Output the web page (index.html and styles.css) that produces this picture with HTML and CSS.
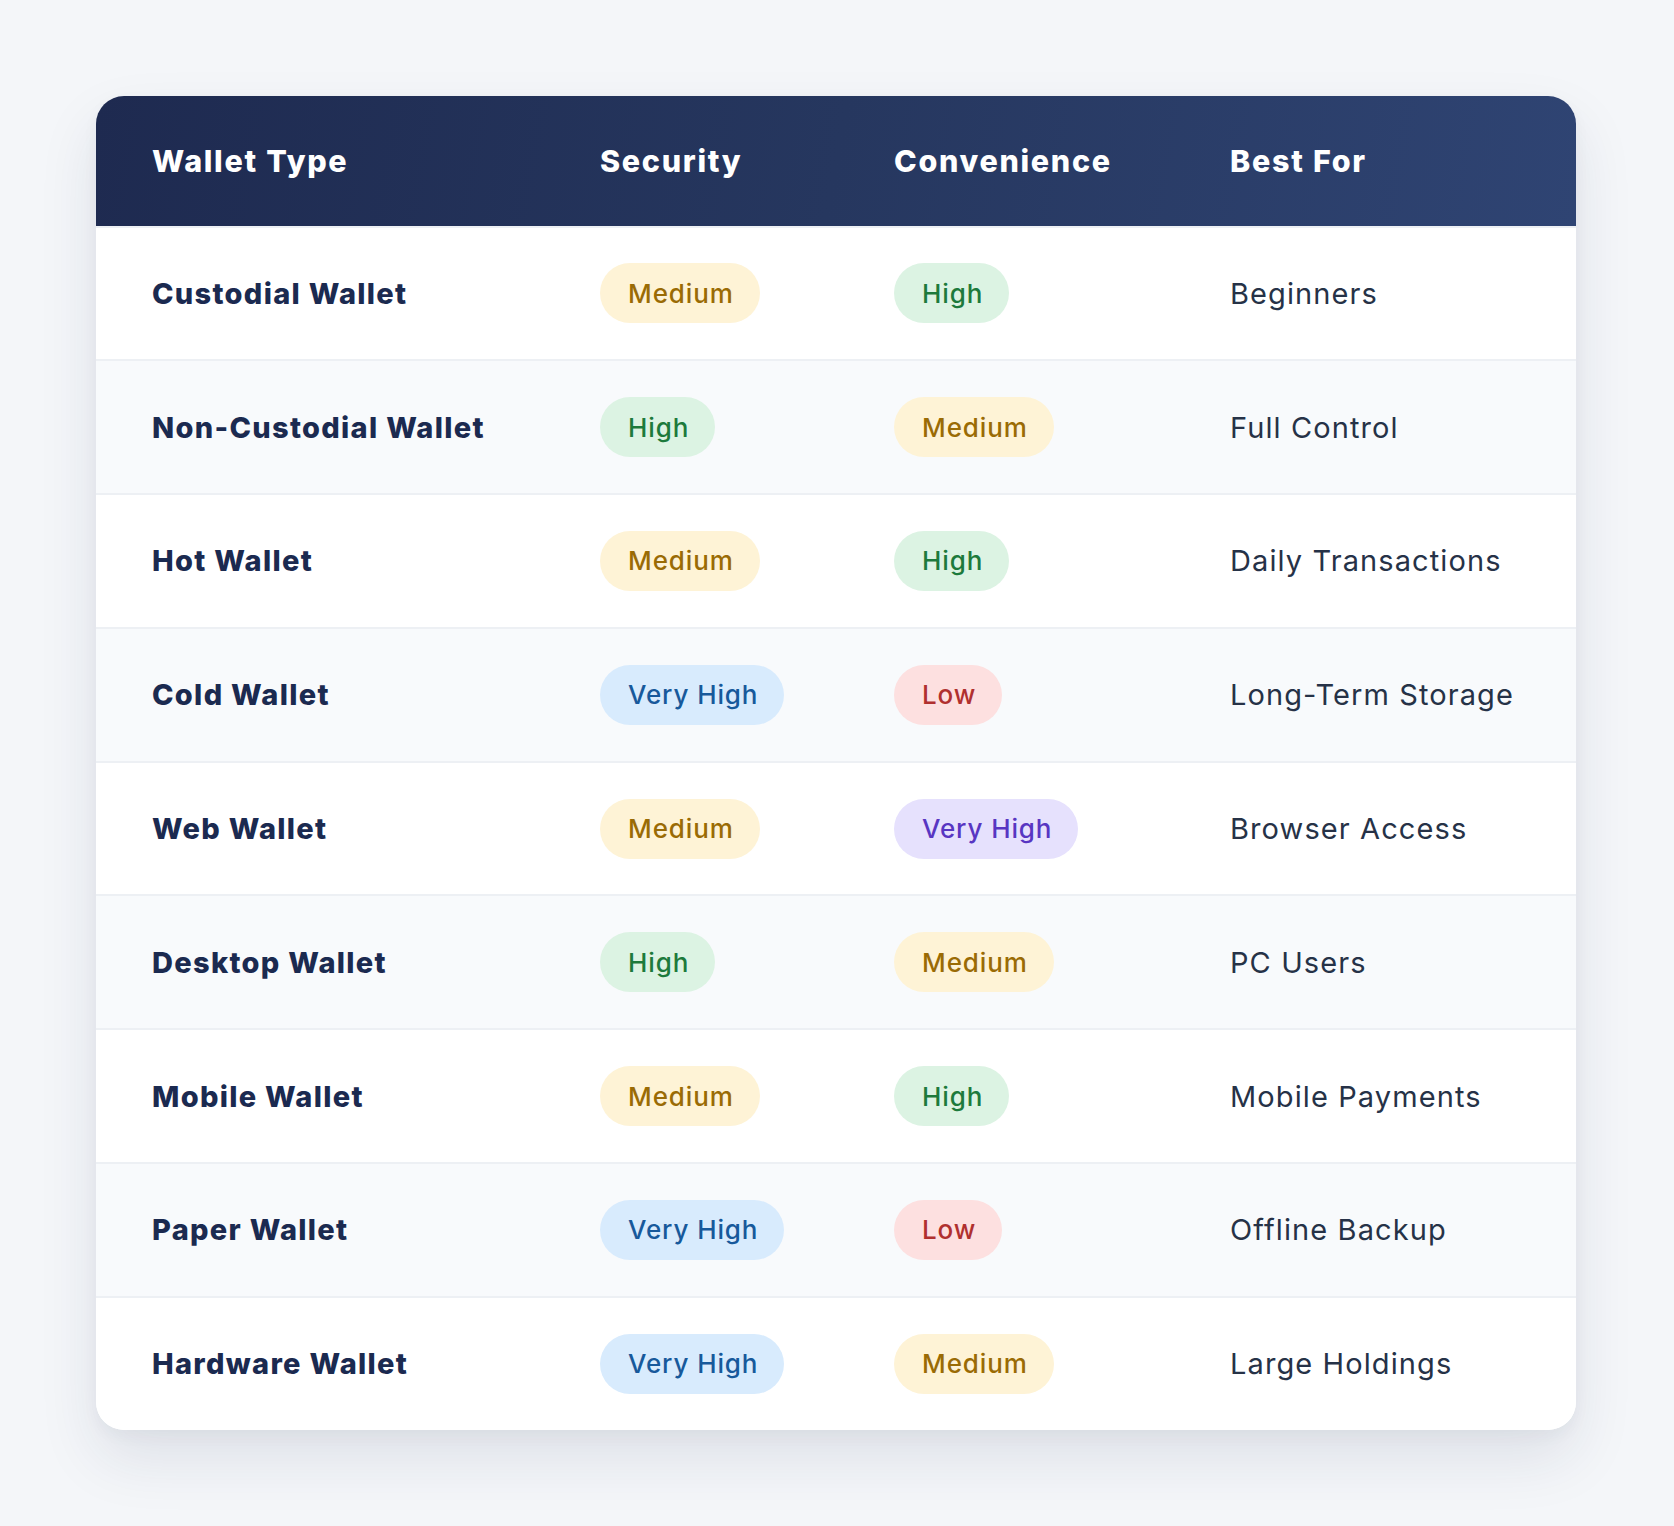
FILE: index.html
```html
<!DOCTYPE html>
<html lang="en">
<head>
<meta charset="utf-8">
<title>Wallet Types</title>
<link rel="stylesheet" href="styles.css">
</head>
<body>
<div class="page">
  <div class="card">
    <div class="row head">
      <div class="cell">Wallet Type</div>
      <div class="cell">Security</div>
      <div class="cell">Convenience</div>
      <div class="cell">Best For</div>
    </div>
    <div class="row">
      <div class="cell name">Custodial Wallet</div>
      <div class="cell"><span class="badge medium">Medium</span></div>
      <div class="cell"><span class="badge high">High</span></div>
      <div class="cell use">Beginners</div>
    </div>
    <div class="row alt">
      <div class="cell name">Non-Custodial Wallet</div>
      <div class="cell"><span class="badge high">High</span></div>
      <div class="cell"><span class="badge medium">Medium</span></div>
      <div class="cell use">Full Control</div>
    </div>
    <div class="row">
      <div class="cell name">Hot Wallet</div>
      <div class="cell"><span class="badge medium">Medium</span></div>
      <div class="cell"><span class="badge high">High</span></div>
      <div class="cell use">Daily Transactions</div>
    </div>
    <div class="row alt">
      <div class="cell name">Cold Wallet</div>
      <div class="cell"><span class="badge very-high">Very High</span></div>
      <div class="cell"><span class="badge low">Low</span></div>
      <div class="cell use">Long-Term Storage</div>
    </div>
    <div class="row">
      <div class="cell name">Web Wallet</div>
      <div class="cell"><span class="badge medium">Medium</span></div>
      <div class="cell"><span class="badge very-high-purple">Very High</span></div>
      <div class="cell use">Browser Access</div>
    </div>
    <div class="row alt">
      <div class="cell name">Desktop Wallet</div>
      <div class="cell"><span class="badge high">High</span></div>
      <div class="cell"><span class="badge medium">Medium</span></div>
      <div class="cell use">PC Users</div>
    </div>
    <div class="row">
      <div class="cell name">Mobile Wallet</div>
      <div class="cell"><span class="badge medium">Medium</span></div>
      <div class="cell"><span class="badge high">High</span></div>
      <div class="cell use">Mobile Payments</div>
    </div>
    <div class="row alt">
      <div class="cell name">Paper Wallet</div>
      <div class="cell"><span class="badge very-high">Very High</span></div>
      <div class="cell"><span class="badge low">Low</span></div>
      <div class="cell use">Offline Backup</div>
    </div>
    <div class="row last">
      <div class="cell name">Hardware Wallet</div>
      <div class="cell"><span class="badge very-high">Very High</span></div>
      <div class="cell"><span class="badge medium">Medium</span></div>
      <div class="cell use">Large Holdings</div>
    </div>
  </div>
</div>
</body>
</html>
```

FILE: styles.css
```css
* { box-sizing: border-box; }

html, body {
  margin: 0;
  padding: 0;
}

body {
  background: #f4f6f9;
  font-family: Inter, "Noto Sans", sans-serif;
  width: 1674px;
  min-height: 1526px;
}

.page {
  padding: 96px 98px 96px 96px;
}

.card {
  width: 1480px;
  background: #ffffff;
  border-radius: 28px;
  overflow: hidden;
  box-shadow: 0 28px 60px rgba(30, 42, 79, 0.10), 0 6px 16px rgba(30, 42, 79, 0.04);
}

.row {
  display: grid;
  grid-template-columns: 448px 294px 336px 1fr;
  align-items: center;
  height: 133.8px;
  border-top: 2px solid #edf0f4;
  background: #ffffff;
}

.row.alt {
  background: #f8fafc;
}

.row.head {
  height: 129.5px;
  border-top: none;
  background: linear-gradient(100deg, #1e2a50 0%, #26375f 50%, #2f4473 100%);
  color: #ffffff;
  font-weight: 800;
  font-size: 30.5px;
  letter-spacing: 1.7px;
}

.cell {
  padding-left: 56px;
  white-space: nowrap;
}

.name {
  font-weight: 800;
  font-size: 29px;
  letter-spacing: 1.3px;
  color: #1b2a50;
}

.use {
  font-weight: 400;
  font-size: 29px;
  letter-spacing: 1.1px;
  color: #263247;
}

.badge {
  display: inline-flex;
  align-items: center;
  height: 60px;
  padding: 0 26px 0 28px;
  border-radius: 30px;
  font-size: 26px;
  font-weight: 500;
  letter-spacing: 0.9px;
}

.medium { background: #fef3d6; color: #9a6b05; }
.high { background: #dcf3e3; color: #1d7a3c; }
.very-high { background: #d8ebfd; color: #17599b; }
.low { background: #fde0e0; color: #b0302f; }
.very-high-purple { background: #e6e1fd; color: #5836c2; }
```
